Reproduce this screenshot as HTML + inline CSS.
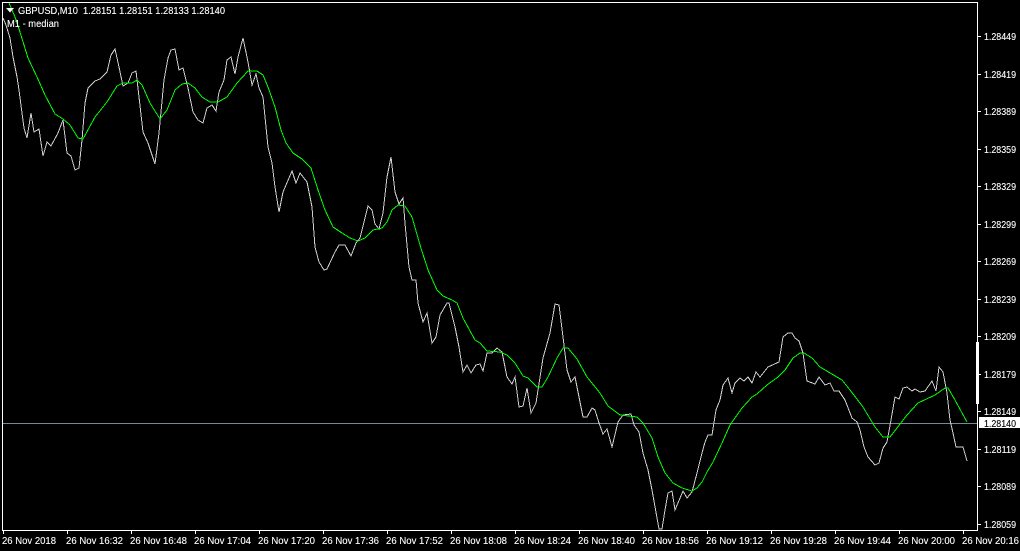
<!DOCTYPE html>
<html>
<head>
<meta charset="utf-8">
<style>
html,body{margin:0;padding:0;background:#000;width:1020px;height:551px;overflow:hidden}
svg{display:block}
text{font-family:"Liberation Sans",sans-serif;font-size:10.5px;fill:#fff;stroke:#fff;stroke-width:.12px}
</style>
</head>
<body>
<svg width="1020" height="551" viewBox="0 0 1020 551" xmlns="http://www.w3.org/2000/svg">
<rect width="1020" height="551" fill="#000"/>
<line x1="3" y1="423.5" x2="978" y2="423.5" stroke="#778899" stroke-width="1" shape-rendering="crispEdges"/>
<polyline fill="none" stroke="#cfcfcf" stroke-width="1" shape-rendering="crispEdges" points="3,18 6,25 10,38 13,57 17,77 19,90 22,113 24,128 27,138 31,113 34,132 39,129 43,156 47,142 51,146 58,133 63,120 67,153 71,156 75,170 79,168 82,140 85,103 88,88 95,81 100,79 107,72 111,55 115,49 119,67 123,86 128,83 132,73 136,71 139,97 143,132 148,143 155,164 159,133 164,80 168,58 171,50 175,49 179,70 183,68 188,88 193,112 198,120 203,123 207,108 212,105 216,111 219,92 224,80 227,60 231,57 235,74 238,57 243,38 248,62 252,85 256,74 259,88 263,97 266,127 268,147 272,163 275,187 279,212 283,192 292,171 296,183 300,173 307,182 312,207 315,247 319,262 324,270 327,269 335,252 339,245 345,245 351,256 356,243 360,238 368,206 372,210 375,224 379,229 383,213 387,177 391,157 395,192 399,204 403,198 405,223 409,267 412,280 416,280 418,303 423,322 427,313 432,343 436,337 440,315 447,303 449,303 455,327 459,347 463,372 467,365 471,373 476,365 480,364 483,371 487,353 492,353 497,348 502,352 507,377 512,384 515,377 519,407 523,406 527,388 531,413 536,403 543,358 550,333 555,304 559,305 563,337 567,370 571,382 575,377 583,417 587,417 592,408 595,410 599,423 603,434 607,429 612,447 618,422 623,415 631,414 634,425 639,432 643,453 648,470 652,490 659,529 662,529 665,510 668,493 672,491 675,510 683,491 687,498 692,492 697,473 702,453 705,442 708,435 712,435 716,410 720,400 723,385 728,378 732,393 735,383 740,378 744,381 748,377 752,383 756,372 760,377 768,367 779,362 783,337 788,333 792,333 795,338 799,341 803,353 807,381 815,384 819,377 825,385 830,383 834,391 839,391 845,400 852,418 857,422 860,430 864,447 868,457 875,465 879,463 883,448 887,442 891,420 895,397 899,399 903,388 907,387 912,391 915,389 920,392 925,391 932,381 936,391 939,367 943,372 947,393 950,420 953,433 956,447 963,447 967,461"/>
<polyline fill="none" stroke="#00ff00" stroke-width="1" shape-rendering="crispEdges" points="9,3 15,17 20,32 28,58 37,77 45,95 55,114 63,119 70,125 78,138 83,139 95,117 107,102 117,86 123,83 132,83 137,80 142,85 150,103 160,119 167,110 175,90 182,84 188,83 195,88 202,97 210,102 218,102 227,97 237,83 248,71 257,71 263,75 268,87 275,107 281,130 286,143 293,153 302,159 311,168 318,190 325,210 333,227 342,233 350,238 358,241 365,238 373,230 382,228 387,222 392,210 398,205 405,206 412,217 420,245 428,270 437,290 443,296 452,300 457,303 463,318 475,340 480,343 487,351 500,352 507,355 515,363 523,376 528,378 537,387 542,387 548,377 557,358 563,348 568,348 577,359 587,377 600,393 608,406 620,415 637,417 643,423 652,438 658,457 665,473 673,483 682,488 692,491 697,488 702,482 707,472 713,462 722,443 730,425 742,408 752,397 757,394 767,385 778,377 785,370 793,358 800,353 804,353 812,358 820,367 842,380 850,390 863,407 875,427 883,437 890,437 897,428 907,415 918,403 935,395 945,388 948,388 955,400 967,422"/>
<path d="M2.5 2.5H977.5V530.5H2.5Z" fill="none" stroke="#fff" stroke-width="1" shape-rendering="crispEdges"/>
<rect x="976" y="342" width="3" height="62" fill="#fff"/>
<path d="M6 8H14L10 12.5Z" fill="#fff"/>
<path fill="none" stroke="#fff" stroke-width="1" shape-rendering="crispEdges" d="M978 36.5h3M978 74.5h3M978 111.5h3M978 149.5h3M978 186.5h3M978 224.5h3M978 261.5h3M978 299.5h3M978 336.5h3M978 374.5h3M978 411.5h3M978 449.5h3M978 486.5h3M978 524.5h3M3.5 531v3M67.5 531v3M131.5 531v3M195.5 531v3M259.5 531v3M323.5 531v3M387.5 531v3M451.5 531v3M515.5 531v3M579.5 531v3M643.5 531v3M707.5 531v3M771.5 531v3M835.5 531v3M899.5 531v3M963.5 531v3"/>
<rect x="979" y="417" width="41" height="11" fill="#fff"/>
<text x="18" y="14" textLength="207" lengthAdjust="spacingAndGlyphs" xml:space="preserve">GBPUSD,M10  1.28151 1.28151 1.28133 1.28140</text>
<text x="7" y="27" textLength="52" lengthAdjust="spacingAndGlyphs">M1 - median</text>
<g>
<text x="984" y="40" textLength="32" lengthAdjust="spacingAndGlyphs">1.28449</text>
<text x="984" y="78" textLength="32" lengthAdjust="spacingAndGlyphs">1.28419</text>
<text x="984" y="115" textLength="32" lengthAdjust="spacingAndGlyphs">1.28389</text>
<text x="984" y="153" textLength="32" lengthAdjust="spacingAndGlyphs">1.28359</text>
<text x="984" y="190" textLength="32" lengthAdjust="spacingAndGlyphs">1.28329</text>
<text x="984" y="228" textLength="32" lengthAdjust="spacingAndGlyphs">1.28299</text>
<text x="984" y="265" textLength="32" lengthAdjust="spacingAndGlyphs">1.28269</text>
<text x="984" y="303" textLength="32" lengthAdjust="spacingAndGlyphs">1.28239</text>
<text x="984" y="340" textLength="32" lengthAdjust="spacingAndGlyphs">1.28209</text>
<text x="984" y="378" textLength="32" lengthAdjust="spacingAndGlyphs">1.28179</text>
<text x="984" y="415" textLength="32" lengthAdjust="spacingAndGlyphs">1.28149</text>
<text x="984" y="453" textLength="32" lengthAdjust="spacingAndGlyphs">1.28119</text>
<text x="984" y="490" textLength="32" lengthAdjust="spacingAndGlyphs">1.28089</text>
<text x="984" y="528" textLength="32" lengthAdjust="spacingAndGlyphs">1.28059</text>
<text x="984" y="427" textLength="32" lengthAdjust="spacingAndGlyphs" style="fill:#000;stroke:#000">1.28140</text>
</g>
<g>
<text x="2" y="544" textLength="54" lengthAdjust="spacingAndGlyphs">26 Nov 2018</text>
<text x="66" y="544" textLength="57" lengthAdjust="spacingAndGlyphs">26 Nov 16:32</text>
<text x="130" y="544" textLength="57" lengthAdjust="spacingAndGlyphs">26 Nov 16:48</text>
<text x="194" y="544" textLength="57" lengthAdjust="spacingAndGlyphs">26 Nov 17:04</text>
<text x="258" y="544" textLength="57" lengthAdjust="spacingAndGlyphs">26 Nov 17:20</text>
<text x="322" y="544" textLength="57" lengthAdjust="spacingAndGlyphs">26 Nov 17:36</text>
<text x="386" y="544" textLength="57" lengthAdjust="spacingAndGlyphs">26 Nov 17:52</text>
<text x="450" y="544" textLength="57" lengthAdjust="spacingAndGlyphs">26 Nov 18:08</text>
<text x="514" y="544" textLength="57" lengthAdjust="spacingAndGlyphs">26 Nov 18:24</text>
<text x="578" y="544" textLength="57" lengthAdjust="spacingAndGlyphs">26 Nov 18:40</text>
<text x="642" y="544" textLength="57" lengthAdjust="spacingAndGlyphs">26 Nov 18:56</text>
<text x="706" y="544" textLength="57" lengthAdjust="spacingAndGlyphs">26 Nov 19:12</text>
<text x="770" y="544" textLength="57" lengthAdjust="spacingAndGlyphs">26 Nov 19:28</text>
<text x="834" y="544" textLength="57" lengthAdjust="spacingAndGlyphs">26 Nov 19:44</text>
<text x="898" y="544" textLength="57" lengthAdjust="spacingAndGlyphs">26 Nov 20:00</text>
<text x="962" y="544" textLength="57" lengthAdjust="spacingAndGlyphs">26 Nov 20:16</text>
</g>
</svg>
</body>
</html>
